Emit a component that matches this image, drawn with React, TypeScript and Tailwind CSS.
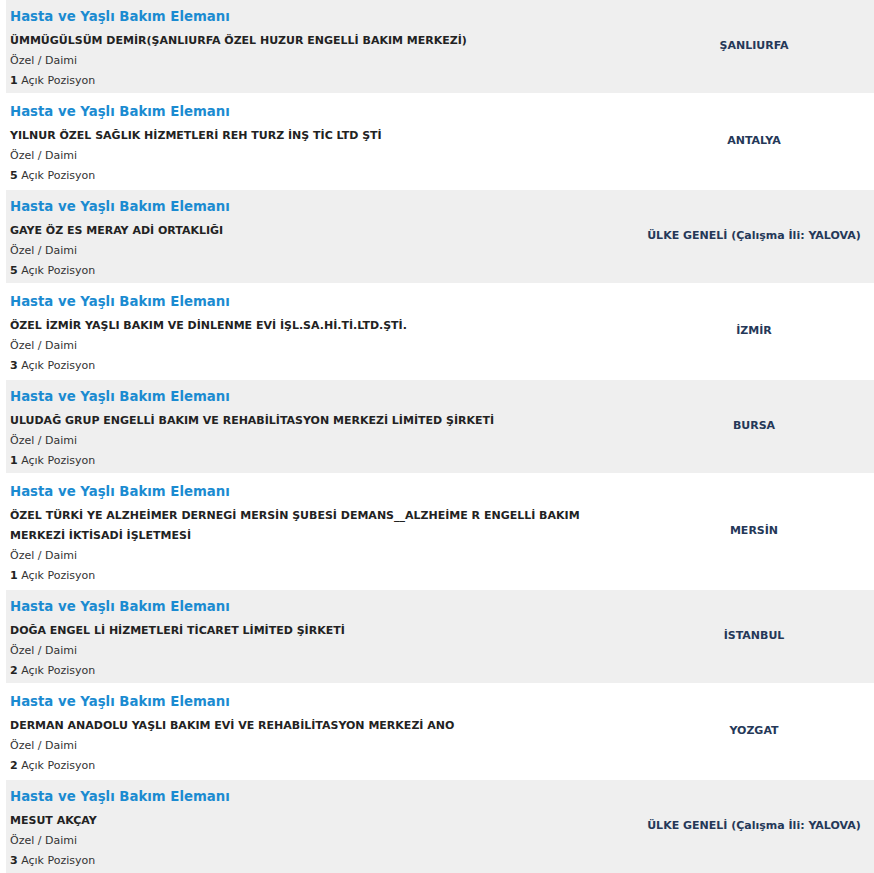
type Job = {
  company: string
  positions: number
  city: string
}

const jobs: Job[] = [
  { company: 'ÜMMÜGÜLSÜM DEMİR(ŞANLIURFA ÖZEL HUZUR ENGELLİ BAKIM MERKEZİ)', positions: 1, city: 'ŞANLIURFA' },
  { company: 'YILNUR ÖZEL SAĞLIK HİZMETLERİ REH TURZ İNŞ TİC LTD ŞTİ', positions: 5, city: 'ANTALYA' },
  { company: 'GAYE ÖZ ES MERAY ADİ ORTAKLIĞI', positions: 5, city: 'ÜLKE GENELİ (Çalışma İli: YALOVA)' },
  { company: 'ÖZEL İZMİR YAŞLI BAKIM VE DİNLENME EVİ İŞL.SA.Hİ.Tİ.LTD.ŞTİ.', positions: 3, city: 'İZMİR' },
  { company: 'ULUDAĞ GRUP ENGELLİ BAKIM VE REHABİLİTASYON MERKEZİ LİMİTED ŞİRKETİ', positions: 1, city: 'BURSA' },
  {
    company: 'ÖZEL TÜRKİ YE ALZHEİMER DERNEGİ MERSİN ŞUBESİ DEMANS__ALZHEİME R ENGELLİ BAKIM MERKEZİ İKTİSADİ İŞLETMESİ',
    positions: 1,
    city: 'MERSİN',
  },
  { company: 'DOĞA ENGEL Lİ HİZMETLERİ TİCARET LİMİTED ŞİRKETİ', positions: 2, city: 'İSTANBUL' },
  { company: 'DERMAN ANADOLU YAŞLI BAKIM EVİ VE REHABİLİTASYON MERKEZİ ANO', positions: 2, city: 'YOZGAT' },
  { company: 'MESUT AKÇAY', positions: 3, city: 'ÜLKE GENELİ (Çalışma İli: YALOVA)' },
]

export default function App() {
  return (
    <div className="flex min-h-screen flex-col gap-[2px] bg-white pl-[6px] font-['DejaVu_Sans',Verdana,sans-serif]">
      {jobs.map((job, i) => (
        <div key={i} className={`flex ${i % 2 === 0 ? 'bg-[#efefef]' : 'bg-white'}`}>
          <div className="flex-1 pt-[7px] pb-[2px] pl-1">
            <div className="h-5 text-[13.3px] leading-5 font-bold text-[#1b8bd1]">
              Hasta ve Yaşlı Bakım Elemanı
            </div>
            <div className="mt-1 pr-10 text-[11px] leading-5 font-bold text-[#222]">{job.company}</div>
            <div className="text-[11px] leading-5 text-[#333]">Özel / Daimi</div>
            <div className="text-[11px] leading-5 text-[#333]">
              <b className="text-[#222]">{job.positions}</b> Açık Pozisyon
            </div>
          </div>
          <div className="flex w-[240px] shrink-0 items-center justify-center text-[11px] font-bold text-[#253858]">
            {job.city}
          </div>
        </div>
      ))}
    </div>
  )
}
